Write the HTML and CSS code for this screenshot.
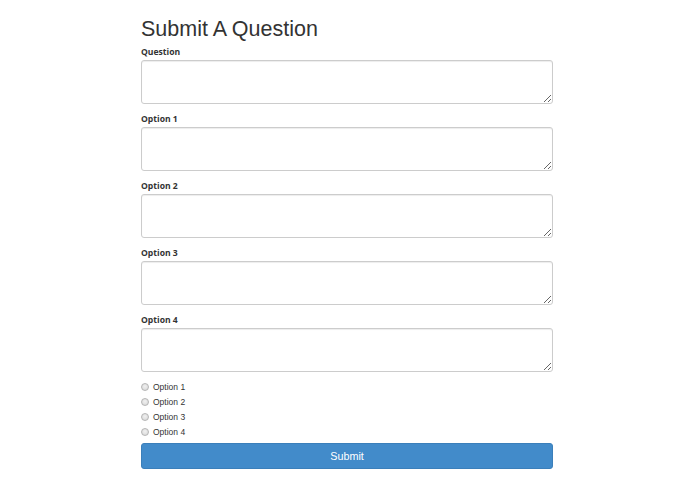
FILE: index.html
```html
<!DOCTYPE html>
<html>
<head>
<meta charset="utf-8">
<link rel="stylesheet" href="styles.css">
</head>
<body>
<div class="container">
  <h1 class="title">Submit A Question</h1>
  <form class="form">
    <div class="group">
      <label class="label">Question</label>
      <textarea class="field"></textarea>
    </div>
    <div class="group">
      <label class="label">Option 1</label>
      <textarea class="field"></textarea>
    </div>
    <div class="group">
      <label class="label">Option 2</label>
      <textarea class="field"></textarea>
    </div>
    <div class="group">
      <label class="label">Option 3</label>
      <textarea class="field"></textarea>
    </div>
    <div class="group last">
      <label class="label">Option 4</label>
      <textarea class="field"></textarea>
    </div>
    <div class="radios">
      <label class="radio"><input type="radio" name="ans"><span>Option 1</span></label>
      <label class="radio"><input type="radio" name="ans"><span>Option 2</span></label>
      <label class="radio"><input type="radio" name="ans"><span>Option 3</span></label>
      <label class="radio"><input type="radio" name="ans"><span>Option 4</span></label>
    </div>
    <button type="button" class="submit">Submit</button>
  </form>
</div>
</body>
</html>
```

FILE: styles.css
```css
html, body {
  margin: 0;
  padding: 0;
  background: #fff;
}
body {
  font-family: "Liberation Sans", Arial, sans-serif;
  color: #333;
}
.container {
  width: 412px;
  margin: 0 auto 0 141px;
  padding-top: 16px;
}
.title {
  margin: 0 0 3px 0;
  font-size: 21.5px;
  line-height: 26px;
  font-weight: 400;
  color: #333;
}
.form {
  display: flex;
  flex-direction: column;
}
.group {
  display: flex;
  flex-direction: column;
  margin-bottom: 8px;
}
.group.last {
  margin-bottom: 7px;
}
.label {
  font-family: "Open Sans", "Noto Sans", sans-serif;
  font-weight: 700;
  font-size: 8.6px;
  line-height: 12px;
  padding-top: 1px;
  margin-bottom: 2px;
  color: #333;
}
.field {
  box-sizing: border-box;
  width: 412px;
  height: 44px;
  margin: 0;
  border: 1px solid #ccc;
  border-radius: 3px;
  box-shadow: inset 0 1px 1px rgba(0,0,0,0.075);
  font-family: "Liberation Sans", Arial, sans-serif;
  font-size: 9px;
  padding: 4px 7px;
  resize: vertical;
  display: block;
}
.radios {
  display: flex;
  flex-direction: column;
}
.radio {
  display: flex;
  align-items: center;
  height: 15px;
  font-size: 8.5px;
  color: #333;
}
.radio input {
  appearance: none;
  -webkit-appearance: none;
  box-sizing: border-box;
  width: 8px;
  height: 8px;
  margin: 0 4px 0 0;
  border-radius: 50%;
  border: 1px solid #b5b5b5;
  background: radial-gradient(circle at 50% 40%, #f0f0f0 0%, #d6d6d6 100%);
}
.submit {
  margin-top: 4px;
  width: 412px;
  height: 26px;
  border: 1px solid #3b7fba;
  border-radius: 3px;
  background: #428bca;
  color: #fff;
  font-family: "Liberation Sans", Arial, sans-serif;
  font-size: 10.8px;
  padding: 0;
}
```
